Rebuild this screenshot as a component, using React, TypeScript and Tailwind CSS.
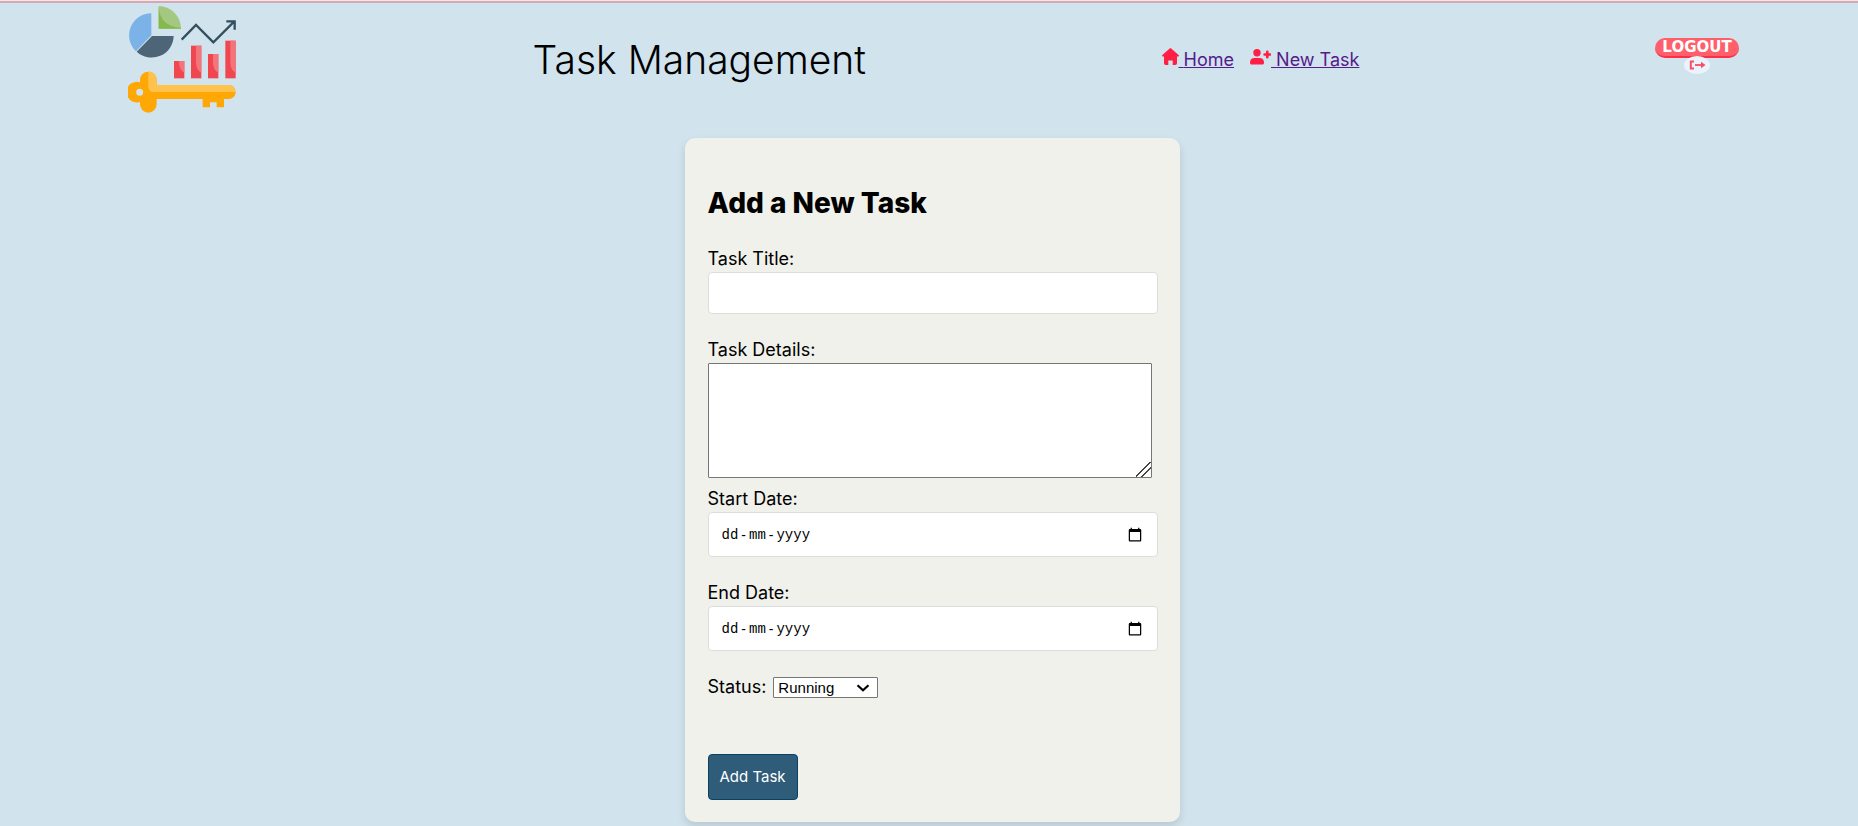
import { useState } from "react";
import type { ReactNode } from "react";

function Logo() {
  return (
    <svg viewBox="54 15 327 327" className="size-[109px] shrink-0" role="img" aria-label="Task Management logo">
      <path d="M124 106V40A66 66 0 0 0 78 154Z" fill="#7bb3e8" />
      <path d="M126 108H191A66 66 0 0 1 80 155Z" fill="#4d6576" />
      <path d="M146 18A68 68 0 0 1 213 86H146Z" fill="#a4c880" />
      <path d="M146 18C148 60 172 82 213 83V86H146Z" fill="#86b94d" />
      <path d="M215 119L258 75L310 127L370 67M349 64H374V89" fill="none" stroke="#34505f" strokeWidth="7" />
      {[
        [192, 183],
        [243, 137],
        [294, 162],
        [346, 122],
      ].map(([x, y]) => (
        <g key={x}>
          <path d={`M${x} ${y}h31V235h-31Z`} fill="#f0464f" />
          <path d={`M${x + 15} ${y}h16V218q-16 -8 -16 -32Z`} fill="#f3757c" />
        </g>
      ))}
      <path
        fillRule="evenodd"
        d="M90 247V240A25 25 0 0 1 140 240V255H356A20 20 0 0 1 356 297H342V322H320V307H300V322H278V297H140V313A25 25 0 0 1 90 313V306A31 31 0 1 1 90 247ZM89 266A10 10 0 1 0 89 287A10 10 0 1 0 89 266Z"
        fill="#ffa704"
      />
      <path d="M115 214A25 25 0 0 1 140 240V255H356A20 20 0 0 1 376 276H132Q115 276 115 258Z" fill="#ffc24d" />
    </svg>
  );
}

function HomeIcon() {
  return (
    <svg viewBox="0 0 17 17" className="h-[17px] w-[17px]" fill="#ff1f44" aria-hidden="true">
      <path d="M7.7.4a1.1 1.1 0 0 1 1.5 0L16.6 7a.9.9 0 0 1-.6 1.6h-1v6.6a1.8 1.8 0 0 1-1.8 1.8h-2.5v-4.6H6.3V17H3.8A1.8 1.8 0 0 1 2 15.200V8.600H1A.9.9 0 0 1 .4 7Z" />
    </svg>
  );
}

function UserPlusIcon() {
  return (
    <svg viewBox="0 0 21 16" className="h-4 w-[21px]" fill="#ff1f44" aria-hidden="true">
      <circle cx="7" cy="3.700" r="3.700" />
      <path d="M0 13.500C0 10.300 2 9 4.500 9h5C12 9 14 10.300 14 13.500c0 1.500-.6 2.100-1.800 2.100H1.800C.6 15.600 0 15 0 13.500Z" />
      <path d="M17.300 2.800v5.400M14.600 5.500H20" stroke="#ff1f44" strokeWidth="2.600" strokeLinecap="round" />
    </svg>
  );
}

function NavLink({ icon, children }: { icon: ReactNode; children: ReactNode }) {
  return (
    <a href="#" className="flex items-center text-[#551a8b]">
      <span className="pb-1.5">{icon}</span>
      <span className="whitespace-pre underline"> {children}</span>
    </a>
  );
}

function LogoutButton() {
  return (
    <button type="button" aria-label="Logout" className="flex flex-col items-center pb-2">
      <span className="flex h-5 w-[84px] items-center justify-center rounded-full border-b-2 border-[#fb2f48] bg-[#fe5f6b] pt-0.5 font-['DejaVu_Sans',sans-serif] text-[15px] leading-none font-bold text-white">
        LOGOUT
      </span>
      <svg viewBox="0 0 26 18" className="-mt-0.5 h-[18px] w-[26px]" aria-hidden="true">
        <ellipse cx="13" cy="9" rx="13" ry="9" fill="#e9f4ff" />
        <path d="M10 5.500H6.800V12.500H10" fill="none" stroke="#fa4f62" strokeWidth="2" />
        <path d="M11 9H19" stroke="#fa4f62" strokeWidth="1.800" />
        <path d="M17 5.800L21.500 9L17 12.200Z" fill="#fa4f62" />
      </svg>
    </button>
  );
}

function DateField({ id, label }: { id: string; label: string }) {
  const [value, setValue] = useState("");
  return (
    <div className="mb-6">
      <label htmlFor={id} className="block leading-6">
        {label}
      </label>
      <div className="relative mt-px">
        <input
          id={id}
          type="date"
          value={value}
          onChange={(e) => setValue(e.target.value)}
          className={
            "block h-[45px] w-full rounded border border-[#dddddd] bg-white px-3 font-['Liberation_Mono',monospace] text-base " +
            (value ? "" : "[&::-webkit-datetime-edit]:opacity-0")
          }
        />
        {!value && (
          <div
            aria-hidden="true"
            className="pointer-events-none absolute inset-y-0 left-3.5 flex items-center gap-[3px] font-['Liberation_Mono',monospace] text-sm"
          >
            <span>dd</span>
            <span className="font-['Liberation_Sans',sans-serif]">-</span>
            <span>mm</span>
            <span className="font-['Liberation_Sans',sans-serif]">-</span>
            <span>yyyy</span>
          </div>
        )}
      </div>
    </div>
  );
}

export default function App() {
  return (
    <div className="min-h-screen border-t border-[#fbe3e8] bg-[#d1e3ed] font-[Inter,sans-serif] text-black">
      <header className="flex items-center justify-between border-t-2 border-[#d3a9b4] pt-0.5 pr-[119px] pl-32">
        <Logo />
        <h1 className="text-[39px] leading-10 font-light">Task Management</h1>
        <nav className="flex gap-4 text-lg">
          <NavLink icon={<HomeIcon />}>Home</NavLink>
          <NavLink icon={<UserPlusIcon />}>New Task</NavLink>
        </nav>
        <LogoutButton />
      </header>

      <main className="flex justify-center pt-6 pl-1.5">
        <form
          onSubmit={(e) => e.preventDefault()}
          className="w-[495px] rounded-[10px] bg-[#f0f1eb] pt-[45px] pr-[22px] pb-[22px] pl-[23px] text-lg shadow-[0_4px_8px_rgba(0,0,0,0.12)]"
        >
          <h2 className="mb-6 text-[28px] leading-10 font-extrabold">Add a New Task</h2>

          <div className="mb-6">
            <label htmlFor="title" className="block leading-6">
              Task Title:
            </label>
            <input
              id="title"
              type="text"
              className="mt-px block h-[42px] w-full rounded border border-[#dddddd] bg-white px-3"
            />
          </div>

          <div className="mb-[9px]">
            <label htmlFor="details" className="block leading-6">
              Task Details:
            </label>
            <textarea
              id="details"
              className="mt-px block h-[115px] w-[444px] resize rounded-[1px] border border-[#767676] bg-white p-0.5 [&::-webkit-resizer]:bg-[linear-gradient(135deg,transparent_0_44%,#444_44%_51%,transparent_51%_66%,#444_66%_73%,transparent_73%)]"
            />
          </div>

          <DateField id="start" label="Start Date:" />
          <DateField id="end" label="End Date:" />

          <div className="mb-[55px] flex items-center gap-[7px]">
            <label htmlFor="status" className="leading-6">
              Status:
            </label>
            <div className="relative">
              <select
                id="status"
                className="block h-[21px] w-[105px] appearance-none rounded-[1px] border border-[#767676] bg-white pl-1 font-['Liberation_Sans',sans-serif] text-[15px] leading-[19px]"
              >
                <option>Running</option>
                <option>Completed</option>
                <option>Pending</option>
              </select>
              <svg
                viewBox="0 0 14 8"
                className="pointer-events-none absolute top-[7px] right-2 h-2 w-3.5"
                aria-hidden="true"
              >
                <path d="M1.500 1.200L7 6.300L12.500 1.200" fill="none" stroke="#000" strokeWidth="2.200" />
              </svg>
            </div>
          </div>

          <button
            type="submit"
            className="h-[46px] w-[90px] rounded border border-[#0a4263] bg-[#2f5c78] text-[15px] text-white"
          >
            Add Task
          </button>
        </form>
      </main>
    </div>
  );
}
